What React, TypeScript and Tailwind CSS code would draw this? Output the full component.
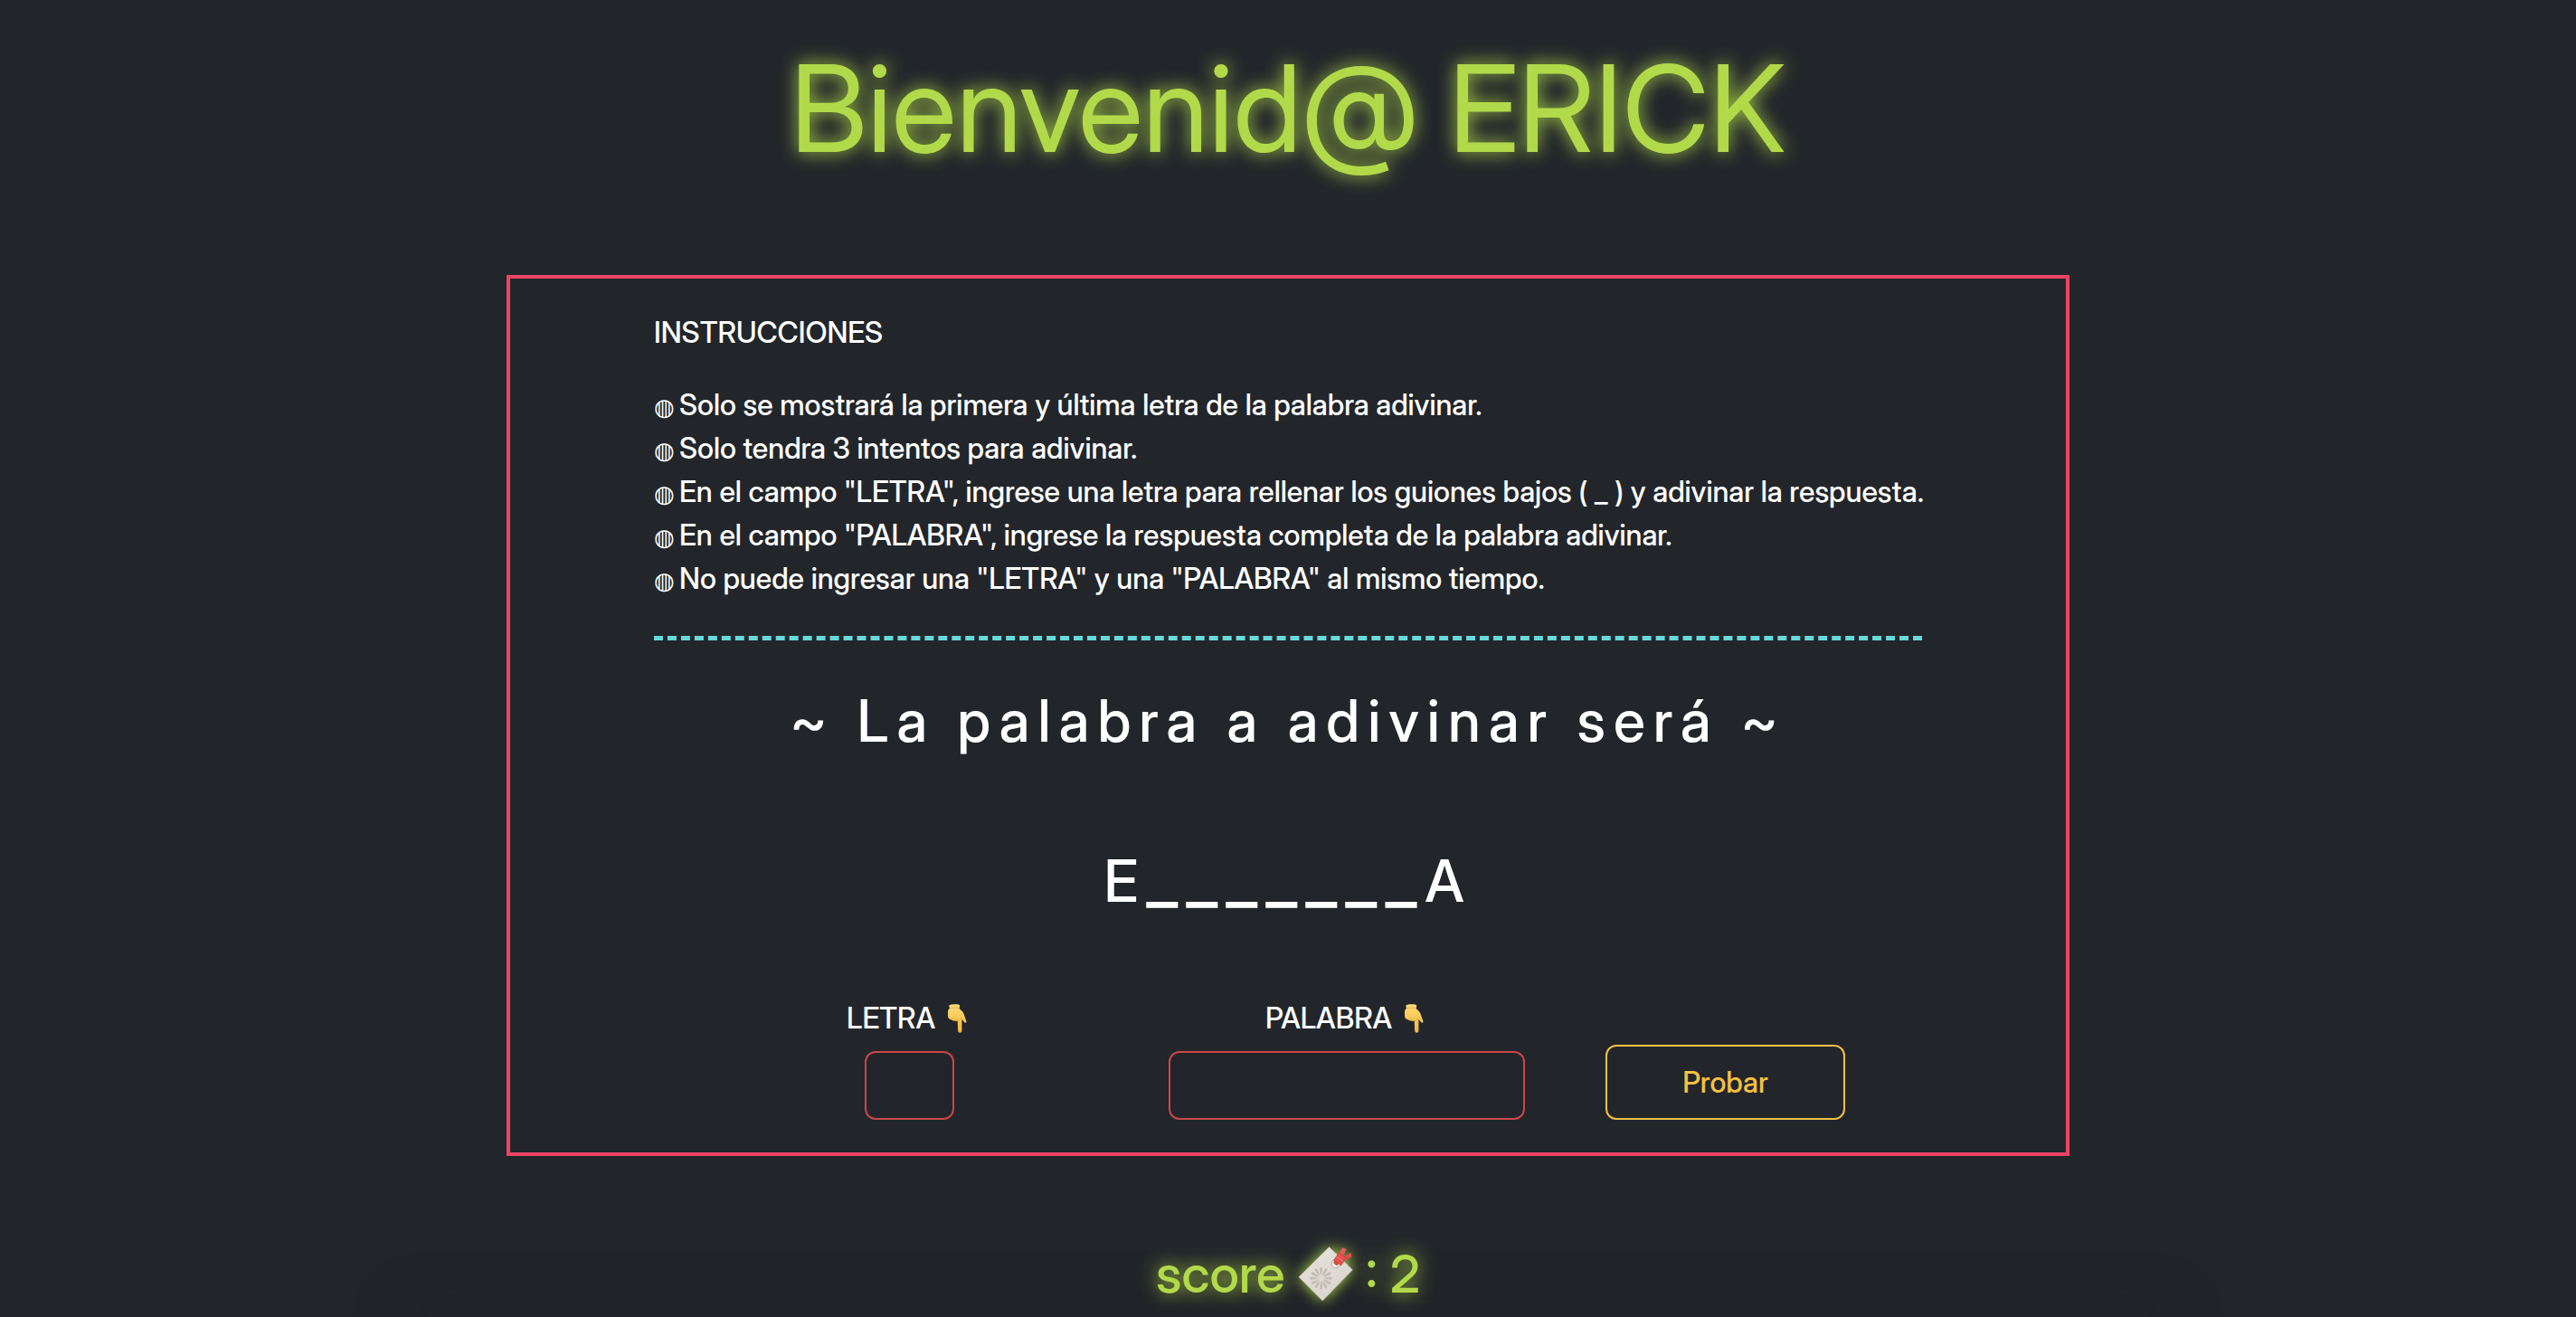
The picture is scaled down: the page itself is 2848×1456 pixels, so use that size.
import type { ReactNode } from "react";

const INSTRUCTIONS = [
  "Solo se mostrará la primera y última letra de la palabra adivinar.",
  "Solo tendra 3 intentos para adivinar.",
  'En el campo "LETRA", ingrese una letra para rellenar los guiones bajos ( _ ) y adivinar la respuesta.',
  'En el campo "PALABRA", ingrese la respuesta completa de la palabra adivinar.',
  'No puede ingresar una "LETRA" y una "PALABRA" al mismo tiempo.',
];

const PETALS = [0, 30, 60, 90, 120, 150, 180, 210, 240, 270, 300, 330];

function PointingDown() {
  return (
    <svg viewBox="0 0 32 32" className="size-8" aria-hidden="true">
      <defs>
        <linearGradient id="skin" x1="0" y1="0" x2="0" y2="1">
          <stop offset="0" stopColor="#fbdc74" />
          <stop offset="0.55" stopColor="#f7c655" />
          <stop offset="1" stopColor="#f0b445" />
        </linearGradient>
      </defs>
      <path
        fill="url(#skin)"
        d="M7.4 1.6C8.6.2 17.6-.2 19 1.2c.5.8-.2 2.4-.4 3.4.2 1.2 1.400 1.800 2.600 2.800 1.500 1.200 2.300 3 2.900 5l2.400 6.800c.4 1.200-1.200 2-2.200 1.100l-2.700-3.300c-.3 1-.2 2-.2 3v9.400c0 3-4.200 3-4.300 0l-.4-11.100c-1.100.9-2.700.7-3.400-.1-1.300.6-2.800.2-3.500-.9C7.400 17 6 15.400 6 13V8.600C6 7 7 5.600 8.100 4.600 7.700 3.600 7 2.400 7.400 1.600Z"
      />
      <path
        fill="none"
        stroke="#dc9a35"
        strokeWidth="0.6"
        strokeLinecap="round"
        d="M8.500 4.700c2.800-.8 7-.8 9.700-.1M9.700 17.100c1.300.2 2.500-.8 2.700-2M13.400 18.200c1.300.1 2.700-.8 3-2.200M16.900 18.200c2 .1 3.600-1.200 4.200-3.200"
      />
    </svg>
  );
}

function Bookmark() {
  return (
    <svg
      viewBox="100 50 184 184"
      className="size-[61px] overflow-visible drop-shadow-[0_0_8px_#b2d949]"
      aria-hidden="true"
    >
      <defs>
        <linearGradient id="paper" x1="0" y1="0" x2="0.6" y2="1">
          <stop offset="0" stopColor="#e9e4df" />
          <stop offset="1" stopColor="#d9d3ce" />
        </linearGradient>
      </defs>
      <path d="M204 52 282 128 182 231 103 152Z" fill="url(#paper)" stroke="#c9c4ba" strokeWidth="2" />
      {PETALS.map((angle) => (
        <path
          key={angle}
          d="M177 148c-3-8-5-19-4-26 1-4 7-4 8 0 1 7-1 18-4 26Z"
          fill="#c2bbb1"
          transform={`rotate(${angle} 177 156)`}
        />
      ))}
      <circle cx="226" cy="107" r="14" fill="#f7f4f0" stroke="#bdb6ae" strokeWidth="4" />
      <circle cx="227" cy="106" r="6" fill="#8c8f4a" />
      <path d="M217 104l12-16 14 12-13 15Z" fill="#d9513f" />
      <path d="M236 76 248 54 262 59 247 86Z" fill="#e45b55" />
      <path d="M247 88 276 70 280 84 252 101Z" fill="#db4d49" />
      <path d="M236 72 260 88 244 113 219 97Z" fill="#e4534f" stroke="#b83a38" strokeWidth="2" />
      <path d="M228 84 250 99" stroke="#f07c74" strokeWidth="3" />
    </svg>
  );
}

function Field({ id, label, children }: { id: string; label: string; children: ReactNode }) {
  return (
    <div className="flex flex-col items-center gap-3">
      <label htmlFor={id} className="flex items-center gap-2 leading-[48px]">
        {label} <PointingDown />
      </label>
      {children}
    </div>
  );
}

export default function App() {
  return (
    <div className="relative flex min-h-screen flex-col items-center overflow-hidden bg-[#22262b] font-['Inter_Display','Inter',sans-serif] text-[32px] font-medium text-white">
      <div className="absolute inset-x-[16%] -bottom-2 h-2 shadow-[0_0_60px_8px_rgba(30,20,26,0.4)]" />

      <h1 className="mt-10 text-[133px] leading-[160px] font-normal text-[#b2d949] [text-shadow:0_0_20px_#b2d949]">
        Bienvenid@ ERICK
      </h1>

      <main className="mt-26 w-full max-w-[1728px] border-4 border-[#eb4464] px-[159px] py-9">
        <h2 className="leading-[48px] font-medium">INSTRUCCIONES</h2>
        <ul className="mt-8 leading-[48px] whitespace-nowrap">
          {INSTRUCTIONS.map((text) => (
            <li key={text} className="flex items-center">
              <span className="w-7 shrink-0 pt-1 font-['DejaVu_Sans',sans-serif] text-[26px] leading-none font-bold">◍</span>
              {text}
            </li>
          ))}
        </ul>
        <hr className="mt-[39px] border-t-[5px] border-dashed border-[#66d9d9]" />

        <div className="text-center text-[64px] leading-[77px] tracking-[9px]">
          <h2 className="mt-[50px] font-medium">~ La palabra a adivinar será ~</h2>
          <p className="mt-24">
            E<span className="text-[76px] leading-none">_______</span>A
          </p>
        </div>

        <form className="mt-[90px] flex items-end justify-end pr-[85px]" onSubmit={(e) => e.preventDefault()}>
          <Field id="letra" label="LETRA">
            <input
              id="letra"
              type="text"
              maxLength={1}
              className="h-[76px] w-[99px] rounded-xl border-2 border-[#cc4549] bg-transparent px-6 outline-none"
            />
          </Field>
          <div className="mr-[89px] ml-[218px]">
            <Field id="palabra" label="PALABRA">
              <input
                id="palabra"
                type="text"
                className="h-[76px] w-[394px] rounded-xl border-2 border-[#cc4549] bg-transparent px-6 outline-none"
              />
            </Field>
          </div>
          <button type="submit" className="h-[83px] w-[265px] rounded-xl border-2 border-[#f6c042] text-[#f6c042]">
            Probar
          </button>
        </form>
      </main>

      <p className="relative mt-[94px] flex items-center gap-[14px] text-[58px] leading-[72px] text-[#b2d949] [text-shadow:0_0_20px_#b2d949]">
        score <Bookmark /> <span>: 2</span>
      </p>
    </div>
  );
}
